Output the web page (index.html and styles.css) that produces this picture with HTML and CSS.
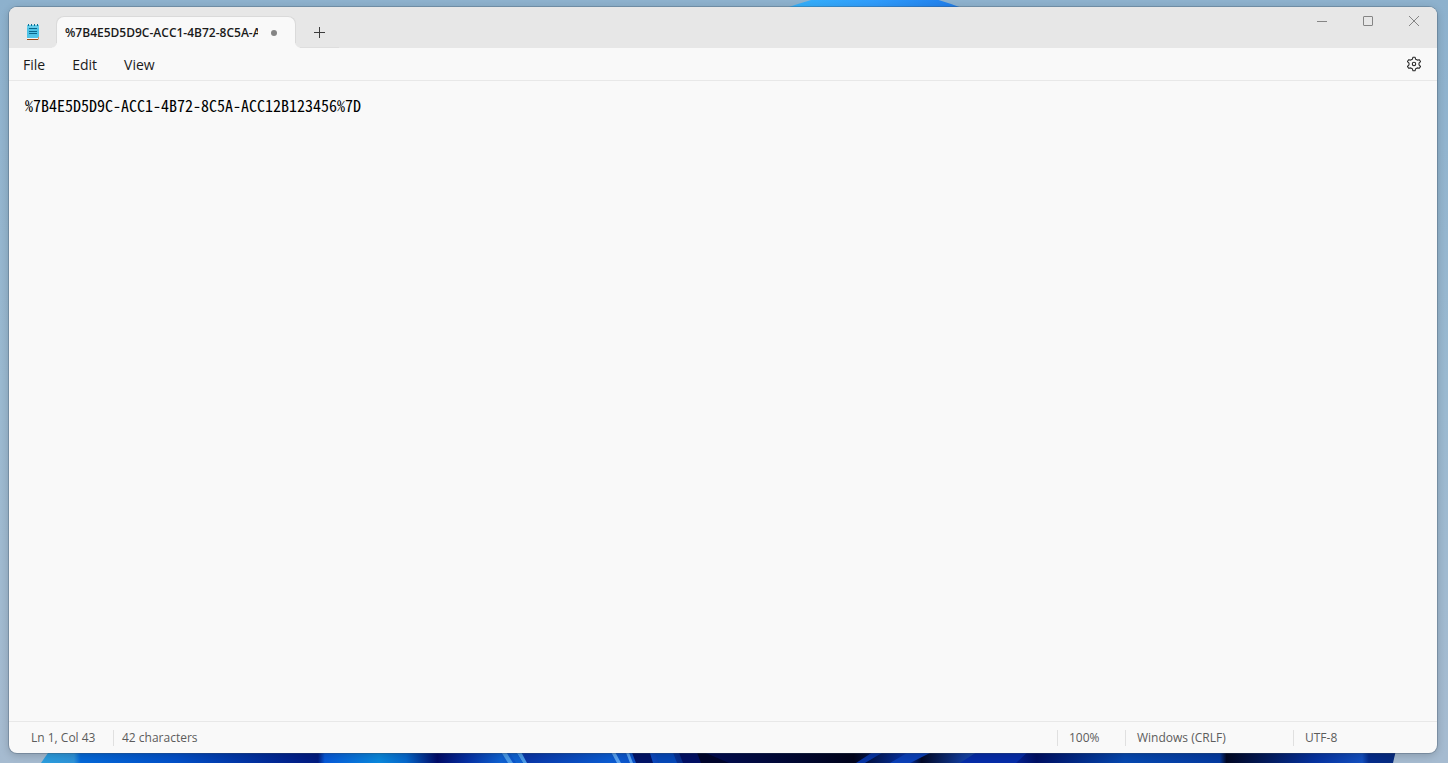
FILE: index.html
```html
<!DOCTYPE html>
<html lang="en">
<head>
    <meta charset="UTF-8">
    <meta name="viewport" content="width=device-width, initial-scale=1.0">
    <title>Notepad</title>
    <link rel="stylesheet" href="styles.css">
</head>
<body>
    <!-- desktop wallpaper -->
    <svg class="wallpaper" viewBox="0 0 1448 763" preserveAspectRatio="none" aria-hidden="true">
        <defs>
            <linearGradient id="sky" x1="0" y1="0" x2="0" y2="1">
                <stop offset="0" stop-color="#8db1cd"/>
                <stop offset="0.5" stop-color="#9ab9d0"/>
                <stop offset="1" stop-color="#a6bbd0"/>
            </linearGradient>
            <linearGradient id="crown" x1="0" y1="0" x2="1" y2="0">
                <stop offset="0" stop-color="#35b2fa"/>
                <stop offset="0.5" stop-color="#2f9cfb"/>
                <stop offset="1" stop-color="#1f7cea"/>
            </linearGradient>
            <linearGradient id="petals" gradientUnits="userSpaceOnUse" x1="40" y1="0" x2="1396" y2="0">
                <stop offset="0" stop-color="#2b9fdf"/>
                <stop offset="0.025" stop-color="#2f93d8"/>
                <stop offset="0.03" stop-color="#0468d8"/>
                <stop offset="0.1" stop-color="#0350c8"/>
                <stop offset="0.19" stop-color="#02208a"/>
                <stop offset="0.205" stop-color="#021c80"/>
                <stop offset="0.21" stop-color="#0759d8"/>
                <stop offset="0.25" stop-color="#0a88dc"/>
                <stop offset="0.27" stop-color="#0668cc"/>
                <stop offset="0.293" stop-color="#020c68"/>
                <stop offset="0.315" stop-color="#0630a4"/>
                <stop offset="0.34" stop-color="#0f62d2"/>
                <stop offset="0.353" stop-color="#0c50c8"/>
                <stop offset="0.358" stop-color="#0a36a8"/>
                <stop offset="0.42" stop-color="#0b5cd2"/>
                <stop offset="0.45" stop-color="#0c4cc4"/>
                <stop offset="0.495" stop-color="#020c50"/>
                <stop offset="0.53" stop-color="#020a40"/>
                <stop offset="0.6" stop-color="#01041c"/>
                <stop offset="0.64" stop-color="#0736b0"/>
                <stop offset="0.65" stop-color="#020826"/>
                <stop offset="0.68" stop-color="#123c9c"/>
                <stop offset="0.7" stop-color="#245cc0"/>
                <stop offset="0.715" stop-color="#0626a0"/>
                <stop offset="0.735" stop-color="#001064"/>
                <stop offset="0.8" stop-color="#0648b0"/>
                <stop offset="0.87" stop-color="#053aa0"/>
                <stop offset="0.875" stop-color="#020824"/>
                <stop offset="0.94" stop-color="#0632a0"/>
                <stop offset="0.975" stop-color="#1450c0"/>
                <stop offset="0.98" stop-color="#052c8c"/>
                <stop offset="1" stop-color="#082c80"/>
            </linearGradient>
        </defs>
        <rect width="1448" height="763" fill="url(#sky)"/>
        <path d="M786 8Q806 1 826 -4H924Q944 1 962 8z" fill="url(#crown)"/>
        <path d="M50 750L41 763H1393L1396 750z" fill="url(#petals)"/>
        <path d="M500 750l8 13h5l-8 -13zM520 750l7 13h-4l-8 -13z" fill="#4a9ae8"/>
        <path d="M508 750l8 13h7l-8 -13z" fill="#0f62d2"/>
        <path d="M610 750l7 13h4l-7 -13zM625 750l5 13h3l-5 -13z" fill="#5aa2f0"/>
        <path d="M631 750l5 13h17l-4 -13z" fill="#021468"/>
        <path d="M655 750l4 13h18l-5 -13z" fill="#0648b8"/>
        <path d="M678 750l5 13h18l-5 -13z" fill="#021064"/>
        <path d="M696 750l5 13h28l-30 -13z" fill="#01052c"/>
        <path d="M876 750l-20 13h9l22 -13z" fill="#0734a4"/>
        <path d="M912 750l-22 13h20l26 -13z" fill="#0b40b8"/>
        <path d="M980 750l-20 13h56l14 -13z" fill="#062ca8"/>
    </svg>

    <main class="window">
        <header class="titlebar">
            <svg class="app-icon" viewBox="0 0 14 18" role="img" aria-label="Notepad">
                <path d="M1 2H13V15H1z" fill="#4fc3e6"/>
                <path d="M1 2H13V5H1z" fill="#66cdea"/>
                <path d="M2.5 1V3M5.5 1V3M8.5 1V3M11.5 1V3" stroke="#0b6f94"/>
                <path d="M3 5.5H11M3 8.5H11M3 10.5H11" stroke="#08668b"/>
                <path d="M1 15H13V16H1z" fill="#f5f5f5"/>
                <path d="M1 16H12V17H1z" fill="#9c4a16"/>
                <path d="M12 14H13V16L12 17z" fill="#d9935f"/>
            </svg>
            <div class="tab">
                <span class="tab-title">%7B4E5D5D9C-ACC1-4B72-8C5A-ACC12B123456%7D</span>
                <span class="tab-unsaved"></span>
            </div>
            <button class="new-tab" aria-label="New tab">
                <svg width="11" height="11" viewBox="0 0 11 11"><path d="M5.5 0V11M0 5.5H11" stroke="#3c3c3c"/></svg>
            </button>
            <div class="window-buttons">
                <button aria-label="Minimize">
                    <svg width="12" height="12" viewBox="0 0 12 12"><path d="M1 6.5H11" stroke="#858585"/></svg>
                </button>
                <button aria-label="Maximize">
                    <svg width="12" height="12" viewBox="0 0 12 12"><rect x="1.5" y="1.5" width="9" height="9" rx="0.5" fill="none" stroke="#858585"/></svg>
                </button>
                <button aria-label="Close">
                    <svg width="12" height="12" viewBox="0 0 12 12"><path d="M1 1L11 11M11 1L1 11" stroke="#858585"/></svg>
                </button>
            </div>
        </header>

        <nav class="menubar">
            <button>File</button>
            <button>Edit</button>
            <button>View</button>
            <button class="settings" aria-label="Settings">
                <svg width="16" height="16" viewBox="0 0 16 16" fill="none" stroke="#2b2b2b" stroke-width="1.1" stroke-linejoin="round">
                    <path d="M7 1.2H9L9.7 3.3L11.3 4.1L13.4 3.7L14.5 5.6L13 7.2V8.8L14.5 10.4L13.4 12.3L11.3 11.9L9.7 12.7L9 14.8H7L6.3 12.7L4.7 11.9L2.6 12.3L1.5 10.4L3 8.8V7.2L1.5 5.6L2.6 3.7L4.7 4.1L6.3 3.3z"/>
                    <circle cx="8" cy="8" r="1.7"/>
                </svg>
            </button>
        </nav>

        <textarea class="editor" aria-label="Text editor" spellcheck="false">%7B4E5D5D9C-ACC1-4B72-8C5A-ACC12B123456%7D</textarea>

        <footer class="statusbar">
            <span class="position">Ln 1, Col 43</span>
            <span class="count">42 characters</span>
            <span class="zoom">100%</span>
            <span class="line-ending">Windows (CRLF)</span>
            <span class="encoding">UTF-8</span>
        </footer>
    </main>
</body>
</html>
```
FILE: styles.css
```css
* {
    box-sizing: border-box;
}
body {
    margin: 0;
    height: 100vh;
    padding: 7px 11px 10px 9px;
    font-family: "Open Sans", "Noto Sans", sans-serif;
    color: #1b1b1b;
    overflow: hidden;
}
button {
    display: flex;
    align-items: center;
    justify-content: center;
    padding: 0;
    border: none;
    background: none;
    color: inherit;
    font: inherit;
}
.wallpaper {
    position: absolute;
    top: 0;
    left: 0;
    width: 100%;
    height: 100%;
    z-index: -1;
}
.window {
    display: flex;
    flex-direction: column;
    height: 100%;
    background-color: #f9f9f9;
    border-radius: 8px;
    box-shadow: 0 0 0 1px rgba(60, 80, 100, 0.3), 0 2px 8px rgba(0, 0, 0, 0.2);
    overflow: hidden;
}

/* title bar */
.titlebar {
    display: flex;
    align-items: flex-end;
    height: 41px;
    background-color: #e7e7e7;
}
.app-icon {
    width: 14px;
    height: 18px;
    margin: 0 16px 7px 17px;
}
.tab {
    position: relative;
    display: flex;
    align-items: center;
    width: 240px;
    height: 32px;
    padding: 0 18px 0 8px;
    border: 1px solid #dadada;
    border-bottom: none;
    border-radius: 8px 8px 0 0;
    background-color: #f9f9f9;
}
/* flared feet of the active tab */
.tab::before,
.tab::after {
    content: "";
    position: absolute;
    bottom: 0;
    width: 5px;
    height: 5px;
}
.tab::before {
    right: 100%;
    background: radial-gradient(circle at 0 0, transparent 4px, #f9f9f9 5px);
}
.tab::after {
    left: 100%;
    background: radial-gradient(circle at 100% 0, transparent 4px, #f9f9f9 5px);
}
.tab-title {
    width: 193px;
    overflow: hidden;
    white-space: nowrap;
    font-size: 12px;
    font-weight: 600;
}
.tab-unsaved {
    width: 6px;
    height: 6px;
    margin-left: auto;
    border-radius: 50%;
    background-color: #858585;
}
.new-tab {
    width: 40px;
    height: 32px;
    margin-left: 3px;
    padding-top: 1px;
    border-bottom: 1px solid #dedede;
}
.window-buttons {
    display: flex;
    align-self: flex-start;
    margin-left: auto;
}
.window-buttons button {
    width: 46px;
    height: 28px;
}

/* menu */
.menubar {
    display: flex;
    align-items: center;
    gap: 27px;
    height: 33px;
    padding: 0 15px 0 14px;
    border-bottom: 1px solid #e8e8e8;
    font-size: 14px;
}
.menubar .settings {
    margin-left: auto;
}

.editor {
    flex: 1;
    width: 100%;
    padding: 15px 16px;
    border: none;
    outline: none;
    resize: none;
    background: none;
    color: #000;
    font-family: "Noto Sans Mono CJK SC", "DejaVu Sans Mono", monospace;
    font-size: 16px;
    line-height: 18px;
}

/* status bar */
.statusbar {
    display: flex;
    align-items: center;
    height: 32px;
    border-top: 1px solid #e8e8e8;
    color: #5c5c5c;
    font-size: 12px;
    line-height: 16px;
}
.statusbar span + span {
    border-left: 1px solid #e0e0e0;
}
.position {
    width: 104px;
    padding-left: 22px;
}
.count {
    flex: 1;
    padding-left: 8px;
}
.zoom {
    width: 68px;
    padding-left: 11px;
}
.line-ending {
    width: 168px;
    padding-left: 11px;
}
.encoding {
    width: 144px;
    padding-left: 11px;
}
```
